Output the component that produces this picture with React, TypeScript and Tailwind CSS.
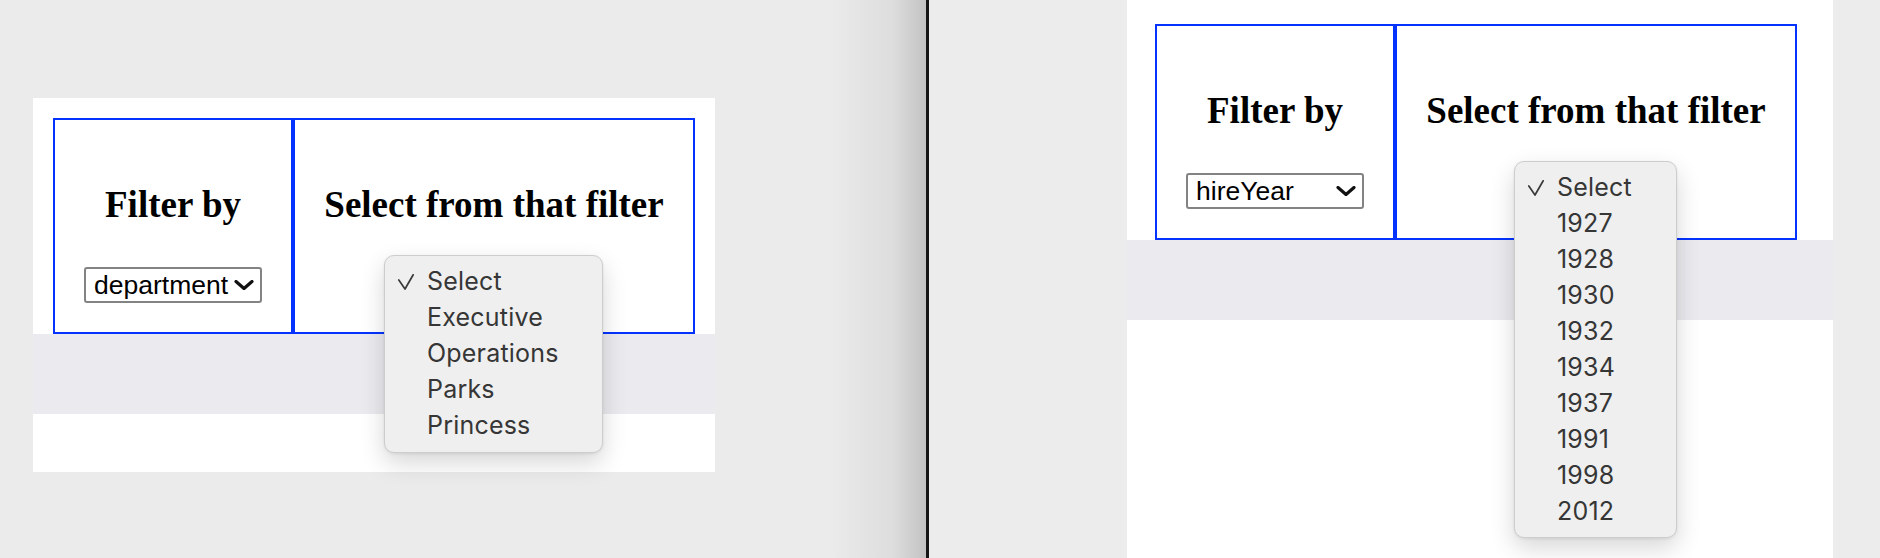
import React from "react";

type PanelProps = {
  width: string;
  padding: string;
  fill: boolean;
  selectLabel: string;
  items: string[];
  menuClass: string;
};

function Chevron() {
  return (
    <svg width="20" height="10" viewBox="0 0 20 10" className="shrink-0">
      <polyline
        points="2,1.5 10,8.5 18,1.5"
        fill="none"
        stroke="#111"
        strokeWidth="3.2"
        strokeLinecap="round"
        strokeLinejoin="round"
      />
    </svg>
  );
}

function Check() {
  return (
    <svg width="16" height="16" viewBox="0 0 16 16" className="absolute left-[13px] top-[11px]">
      <polyline
        points="0.8,6 7,15 15.2,0.8"
        fill="none"
        stroke="#3a3a3a"
        strokeWidth="1.7"
        strokeLinecap="round"
        strokeLinejoin="round"
      />
    </svg>
  );
}

function Menu({ items, className }: { items: string[]; className: string }) {
  return (
    <div
      className={
        "absolute rounded-[10px] border border-[#cdcdcd] bg-[#efefef] pt-[7px] shadow-[0_10px_24px_rgba(0,0,0,0.16),0_1px_3px_rgba(0,0,0,0.08)] " +
        className
      }
    >
      {items.map((it, i) => (
        <div
          key={it}
          className="relative flex h-[36px] items-center pl-[42px] font-['Inter',sans-serif] text-[25px] leading-none tracking-[0.2px] text-[#363636]"
        >
          {i === 0 && <Check />}
          {it}
        </div>
      ))}
    </div>
  );
}

function Panel({ width, padding, fill, selectLabel, items, menuClass }: PanelProps) {
  return (
    <div className={"relative flex flex-col bg-white " + width + " " + (fill ? "h-full" : "h-[374px]")}>
      <div className={padding}>
        <div className="flex h-[216px] w-[642px]">
          <div className="flex h-full w-[240px] flex-col items-center border-2 border-[#0433ff]">
            <div className="mt-[64px] font-['Liberation_Serif',serif] text-[37px] font-bold leading-[42px] text-black">
              Filter by
            </div>
            <div className="mt-[41px] flex h-[36px] w-[178px] items-center justify-between rounded-[3px] border-2 border-[#838383] bg-white pl-[8px] pr-[6px]">
              <span className="font-['Liberation_Sans',sans-serif] text-[26.5px] leading-none text-black">
                {selectLabel}
              </span>
              <Chevron />
            </div>
          </div>
          <div className="flex h-full w-[402px] flex-col items-center border-2 border-l-2 border-[#0433ff]">
            <div className="mt-[64px] whitespace-nowrap font-['Liberation_Serif',serif] text-[37px] font-bold leading-[42px] text-black">
              Select from that filter
            </div>
          </div>
        </div>
      </div>
      <div className="h-[80px] w-full bg-[#ebebef]" />
      <div className="w-full flex-1 bg-white" />
      <Menu items={items} className={menuClass} />
    </div>
  );
}

export default function App() {
  return (
    <div className="flex h-[558px] w-[1880px] overflow-hidden bg-[#ececec]">
      <div className="h-full w-[926px] shrink-0 bg-[linear-gradient(to_right,#ebebeb_0px,#ebebeb_830px,#dddddd_893px,#c3c3c3_926px)] pl-[33px] pt-[98px]">
        <Panel
          width="w-[682px]"
          padding="pl-[20px] pt-[20px]"
          fill={false}
          selectLabel="department"
          items={["Select", "Executive", "Operations", "Parks", "Princess"]}
          menuClass="left-[351px] top-[157px] w-[219px] pb-[9px]"
        />
      </div>
      <div className="h-full w-[3px] shrink-0 bg-[#161616]" />
      <div className="h-full shrink-0 pl-[198px]">
        <Panel
          width="w-[706px]"
          padding="pl-[28px] pt-[24px]"
          fill={true}
          selectLabel="hireYear"
          items={["Select", "1927", "1928", "1930", "1932", "1934", "1937", "1991", "1998", "2012"]}
          menuClass="left-[387px] top-[161px] w-[163px] pb-[8px]"
        />
      </div>
    </div>
  );
}
